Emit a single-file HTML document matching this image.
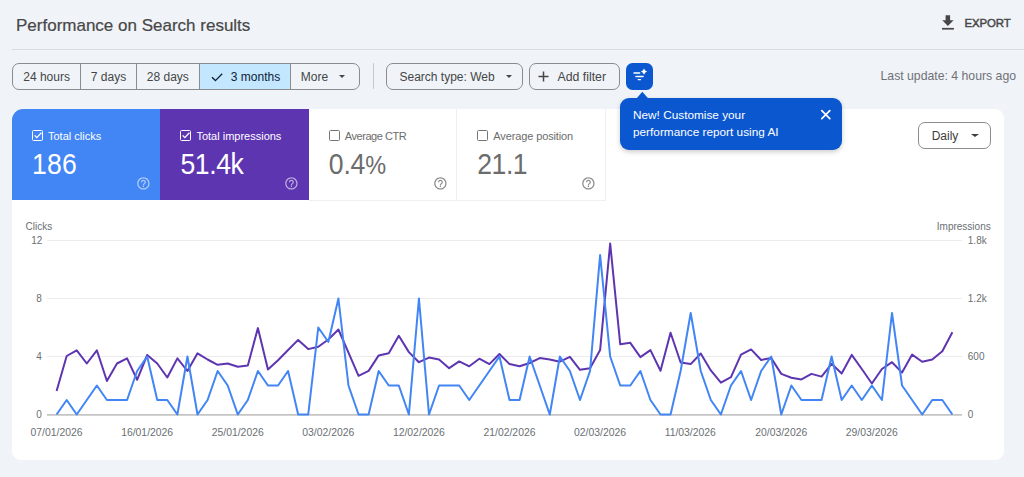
<!DOCTYPE html>
<html><head><meta charset="utf-8">
<style>
*{box-sizing:border-box;margin:0;padding:0}
html,body{width:1024px;height:477px;overflow:hidden;background:#f0f3f8;font-family:"Liberation Sans",sans-serif;position:relative}
.a{position:absolute;white-space:nowrap}
.title{left:16px;top:14.8px;font-size:17px;color:#474747;line-height:22px;-webkit-text-stroke:0.2px #474747}
.hr{left:12px;top:49px;width:1012px;height:1px;background:#d9dce1}
.export{left:964.5px;top:16.6px;font-size:11.4px;font-weight:400;color:#474747;letter-spacing:-0.1px;line-height:13px;-webkit-text-stroke:0.45px #474747}
.seg{left:12px;top:63px;width:348px;height:27px;border:1px solid #8a8c8e;border-radius:7px;overflow:hidden;display:flex}
.seg div{height:100%;border-right:1px solid #8a8c8e;font-size:12px;color:#444746;line-height:26px;position:relative}
.btn{border:1px solid #8a8c8e;border-radius:7px;height:27px;font-size:12px;color:#444746;line-height:26px}
.tri{position:absolute;width:0;height:0;border-left:3.3px solid transparent;border-right:3.3px solid transparent;border-top:3.5px solid #444746}
.card{left:12px;top:109px;width:992px;height:351px;background:#fff;border-radius:9px}
.m{top:109px;height:91px;width:148.4px}
.m .lab{position:absolute;left:36px;top:19.7px;font-size:11px;line-height:14px}
.m .val{position:absolute;left:20px;top:41.2px;font-size:26.6px;line-height:31px;letter-spacing:0.2px;transform:scaleY(1.08);transform-origin:0 24.3px}
.m .cb{position:absolute;left:20px;top:20.8px;width:11px;height:11px;border:1.3px solid;border-radius:1.5px}
.m .help{position:absolute;left:123.8px;top:67px}
.ax{font-size:10px;color:#6b6f73;line-height:12px;margin-top:0.5px}
.dl{font-size:10.4px;color:#6b6f73;line-height:12px;margin-top:0.5px}
</style></head><body>
<div class="a title">Performance on Search results</div>
<svg class="a" style="left:936px;top:10px" width="24" height="24" viewBox="0 0 24 24"><path d="M9.6 5.3h4.5v5h3.5L11.85 16 6.3 10.3h3.3z" fill="#474747"/><rect x="6" y="17.9" width="11.9" height="1.7" fill="#474747"/></svg>
<div class="a export">EXPORT</div>
<div class="a hr"></div>

<div class="a seg">
  <div style="width:68.5px;text-align:center">24 hours</div>
  <div style="width:56px;text-align:center">7 days</div>
  <div style="width:63.3px;text-align:center">28 days</div>
  <div style="width:91.5px;background:#c2e7ff;color:#0e2238"><svg style="position:absolute;left:11px;top:7.6px" width="12" height="10" viewBox="0 0 12 10"><path d="M1 5.2l3.4 3.4L11.2 1.7" fill="none" stroke="#0e2238" stroke-width="1.35"/></svg><span style="position:absolute;left:31px">3 months</span></div>
  <div style="width:68.5px;border-right:none"><span style="position:absolute;left:10px">More</span><span class="tri" style="left:48.5px;top:11px"></span></div>
</div>
<div class="a" style="left:373px;top:63px;width:1px;height:26px;background:#c7c9cc"></div>
<div class="a btn" style="left:386px;top:63px;width:136.5px"><span style="position:absolute;left:12.5px">Search type: Web</span><span class="tri" style="left:118.8px;top:11px"></span></div>
<div class="a btn" style="left:529px;top:63px;width:90.6px"><svg style="position:absolute;left:7.5px;top:6.8px" width="11" height="11" viewBox="0 0 11 11"><path d="M5.5 0.5v10M0.5 5.5h10" stroke="#444746" stroke-width="1.5"/></svg><span style="position:absolute;left:27.5px;font-size:12.3px">Add filter</span></div>
<div class="a" style="left:626px;top:63px;width:26.8px;height:26.5px;background:#0b57d0;border-radius:6.5px"></div>
<svg class="a" style="left:626px;top:63px" width="27" height="27" viewBox="0 0 27 27">
<path d="M8 10h5.7M9.9 13.5h7.2M12.2 16.6h2.3" stroke="#fff" stroke-width="1.4" stroke-linecap="round"/>
<path d="M18 5.5 Q18.8 7.8 21.1 8.6 Q18.8 9.4 18 11.7 Q17.2 9.4 14.9 8.6 Q17.2 7.8 18 5.5z" fill="#fff"/>
</svg>
<div class="a" style="left:880.5px;top:69px;font-size:12.25px;color:#6f7275;line-height:14px">Last update: 4 hours ago</div>

<div class="a card"></div>
<!-- metrics -->
<div class="a m" style="left:12px;background:#4285f4;color:#fff;border-top-left-radius:11px">
 <div class="cb" style="border-color:#fff"><svg style="position:absolute;left:0.8px;top:1.2px" width="8" height="7" viewBox="0 0 8 7"><path d="M0.6 3.4l2.2 2.2L7.4 0.8" fill="none" stroke="#fff" stroke-width="1.3"/></svg></div>
 <div class="lab">Total clicks</div><div class="val">186</div>
 <svg class="help" width="14.8" height="14.8" viewBox="0 0 24 24"><path fill="rgba(255,255,255,.6)" d="M11 18h2v-2h-2v2zm1-16C6.48 2 2 6.48 2 12s4.48 10 10 10 10-4.48 10-10S17.52 2 12 2zm0 18c-4.41 0-8-3.59-8-8s3.59-8 8-8 8 3.59 8 8-3.59 8-8 8zm0-14c-2.21 0-4 1.79-4 4h2c0-1.1.9-2 2-2s2 .9 2 2c0 2-3 1.75-3 5h2c0-2.25 3-2.5 3-5 0-2.21-1.79-4-4-4z"/></svg>
</div>
<div class="a m" style="left:160.4px;background:#5e35b1;color:#fff">
 <div class="cb" style="border-color:#fff"><svg style="position:absolute;left:0.8px;top:1.2px" width="8" height="7" viewBox="0 0 8 7"><path d="M0.6 3.4l2.2 2.2L7.4 0.8" fill="none" stroke="#fff" stroke-width="1.3"/></svg></div>
 <div class="lab">Total impressions</div><div class="val" style="letter-spacing:-0.4px">51.4k</div>
 <svg class="help" width="14.8" height="14.8" viewBox="0 0 24 24"><path fill="rgba(255,255,255,.6)" d="M11 18h2v-2h-2v2zm1-16C6.48 2 2 6.48 2 12s4.48 10 10 10 10-4.48 10-10S17.52 2 12 2zm0 18c-4.41 0-8-3.59-8-8s3.59-8 8-8 8 3.59 8 8-3.59 8-8 8zm0-14c-2.21 0-4 1.79-4 4h2c0-1.1.9-2 2-2s2 .9 2 2c0 2-3 1.75-3 5h2c0-2.25 3-2.5 3-5 0-2.21-1.79-4-4-4z"/></svg>
</div>
<div class="a m" style="left:308.8px;background:#fff;color:#6c6c6c">
 <div class="cb" style="border-color:#757575"></div>
 <div class="lab" style="letter-spacing:-0.45px">Average CTR</div><div class="val" style="letter-spacing:-0.2px">0.4<span style="font-size:23.5px">%</span></div>
 <svg class="help" width="14.8" height="14.8" viewBox="0 0 24 24"><path fill="#8a8a8a" d="M11 18h2v-2h-2v2zm1-16C6.48 2 2 6.48 2 12s4.48 10 10 10 10-4.48 10-10S17.52 2 12 2zm0 18c-4.41 0-8-3.59-8-8s3.59-8 8-8 8 3.59 8 8-3.59 8-8 8zm0-14c-2.21 0-4 1.79-4 4h2c0-1.1.9-2 2-2s2 .9 2 2c0 2-3 1.75-3 5h2c0-2.25 3-2.5 3-5 0-2.21-1.79-4-4-4z"/></svg>
</div>
<div class="a" style="left:456.3px;top:109px;width:1px;height:91px;background:#efefef"></div>
<div class="a" style="left:308.8px;top:199.5px;width:297px;height:1px;background:#efefef"></div>
<div class="a" style="left:604.8px;top:109px;width:1px;height:91px;background:#efefef"></div>
<div class="a m" style="left:457.3px;width:147.5px;background:#fff;color:#6c6c6c">
 <div class="cb" style="border-color:#757575"></div>
 <div class="lab" style="letter-spacing:-0.12px">Average position</div><div class="val" style="letter-spacing:-0.5px">21.1</div>
 <svg class="help" width="14.8" height="14.8" viewBox="0 0 24 24"><path fill="#8a8a8a" d="M11 18h2v-2h-2v2zm1-16C6.48 2 2 6.48 2 12s4.48 10 10 10 10-4.48 10-10S17.52 2 12 2zm0 18c-4.41 0-8-3.59-8-8s3.59-8 8-8 8 3.59 8 8-3.59 8-8 8zm0-14c-2.21 0-4 1.79-4 4h2c0-1.1.9-2 2-2s2 .9 2 2c0 2-3 1.75-3 5h2c0-2.25 3-2.5 3-5 0-2.21-1.79-4-4-4z"/></svg>
</div>

<!-- tooltip -->
<div class="a" style="left:619.8px;top:97.8px;width:222px;height:52px;background:#0b57d0;border-radius:9px;box-shadow:0 2px 5px rgba(0,0,0,.2)"></div>
<svg class="a" style="left:636px;top:91px" width="13" height="8" viewBox="0 0 13 8"><path d="M0.5 7.5 L6.3 0.8 L12.3 7.5z" fill="#0b57d0"/></svg>
<div class="a" style="left:633px;top:107.2px;font-size:11.8px;line-height:16.9px;color:#fff">New! Customise your<br>performance report using AI</div>
<svg class="a" style="left:820px;top:108.5px" width="11" height="11" viewBox="0 0 11 11"><path d="M1.8 1.7l8 8M9.8 1.7l-8 8" stroke="#fff" stroke-width="1.7" stroke-linecap="round"/></svg>

<!-- daily -->
<div class="a btn" style="left:918px;top:122px;width:73px;height:26.5px;border-color:#8a8c8e"><span style="position:absolute;left:12.7px;top:0;color:#3c3c3c">Daily</span><span class="tri" style="left:52px;top:11px;border-left-width:4px;border-right-width:4px;border-top-color:#3c3c3c"></span></div>

<!-- chart -->
<div class="a ax" style="left:25.5px;top:220px">Clicks</div>
<div class="a ax" style="left:936.8px;top:220px">Impressions</div>
<svg class="a" style="left:0;top:0" width="1024" height="477">
 <g stroke="#ececec" stroke-width="1">
  <line x1="47" y1="240.5" x2="962" y2="240.5"/>
  <line x1="47" y1="298.5" x2="962" y2="298.5"/>
  <line x1="47" y1="356.5" x2="962" y2="356.5"/>
 </g>
 <line x1="47" y1="414.8" x2="962" y2="414.8" stroke="#c4c4c4" stroke-width="1.8"/>
 <polyline fill="none" stroke="#5e35b1" stroke-width="2" stroke-linejoin="round" points="56.60,391.00 66.67,356.00 76.73,350.30 86.80,363.50 96.86,350.30 106.92,381.00 116.99,363.50 127.06,358.40 137.12,379.80 147.19,355.00 157.25,363.50 167.31,377.50 177.38,358.40 187.44,371.00 197.51,353.30 207.57,359.50 217.64,364.80 227.70,363.50 237.77,366.70 247.83,365.50 257.90,328.10 267.96,369.60 278.03,360.30 288.09,350.00 298.16,339.90 308.23,349.10 318.29,346.70 328.36,339.50 338.42,329.50 348.49,352.70 358.55,375.80 368.62,370.90 378.68,355.40 388.75,353.20 398.81,335.80 408.88,352.10 418.94,362.20 429.00,357.60 439.07,359.50 449.13,368.20 459.20,361.40 469.26,366.30 479.33,358.70 489.39,364.10 499.46,354.00 509.52,364.10 519.59,366.30 529.65,363.00 539.72,358.10 549.78,359.50 559.85,361.70 569.91,356.80 579.98,369.80 590.04,368.20 600.11,350.10 610.17,243.50 620.24,344.30 630.30,342.80 640.37,357.10 650.43,350.10 660.50,370.80 670.56,332.70 680.63,362.50 690.69,364.10 700.76,353.50 710.83,370.40 720.89,382.60 730.96,377.20 741.02,354.60 751.09,349.40 761.15,360.00 771.22,358.10 781.28,373.90 791.35,377.70 801.41,379.40 811.48,373.90 821.54,376.60 831.61,363.80 841.67,373.50 851.74,354.90 861.80,369.00 871.87,383.50 881.93,369.00 892.00,362.20 902.06,372.60 912.12,354.60 922.19,361.70 932.25,359.50 942.32,351.30 952.38,332.20"/>
 <polyline fill="none" stroke="#4285f4" stroke-width="2" stroke-linejoin="round" points="56.60,414.50 66.67,400.00 76.73,414.50 86.80,400.00 96.86,385.50 106.92,400.00 116.99,400.00 127.06,400.00 137.12,371.00 147.19,356.50 157.25,400.00 167.31,400.00 177.38,414.50 187.44,356.50 197.51,414.50 207.57,400.00 217.64,371.00 227.70,385.50 237.77,414.50 247.83,400.00 257.90,371.00 267.96,385.50 278.03,385.50 288.09,371.00 298.16,414.50 308.23,414.50 318.29,327.50 328.36,342.00 338.42,298.50 348.49,385.50 358.55,414.50 368.62,414.50 378.68,371.00 388.75,385.50 398.81,385.50 408.88,414.50 418.94,298.50 429.00,414.50 439.07,385.50 449.13,385.50 459.20,385.50 469.26,400.00 479.33,385.50 489.39,371.00 499.46,356.50 509.52,400.00 519.59,400.00 529.65,356.50 539.72,385.50 549.78,414.50 559.85,356.50 569.91,371.00 579.98,400.00 590.04,371.00 600.11,255.00 610.17,356.50 620.24,385.50 630.30,385.50 640.37,371.00 650.43,400.00 660.50,414.50 670.56,414.50 680.63,371.00 690.69,313.00 700.76,371.00 710.83,400.00 720.89,414.50 730.96,385.50 741.02,371.00 751.09,400.00 761.15,371.00 771.22,356.50 781.28,414.50 791.35,385.50 801.41,400.00 811.48,400.00 821.54,400.00 831.61,356.50 841.67,400.00 851.74,385.50 861.80,400.00 871.87,385.50 881.93,400.00 892.00,313.00 902.06,385.50 912.12,400.00 922.19,414.50 932.25,400.00 942.32,400.00 952.38,414.50"/>
</svg>
<div class="a ax" style="left:31.3px;top:234.5px">12</div>
<div class="a ax" style="left:36.2px;top:292.5px">8</div>
<div class="a ax" style="left:36.2px;top:350.5px">4</div>
<div class="a ax" style="left:36.2px;top:408.5px">0</div>
<div class="a ax" style="left:967.8px;top:234.5px">1.8k</div>
<div class="a ax" style="left:967.8px;top:292.5px">1.2k</div>
<div class="a ax" style="left:967.8px;top:350.5px">600</div>
<div class="a ax" style="left:967.8px;top:408.5px">0</div>
<div class="a dl" style="left:30.55px;top:426px">07/01/2026</div>
<div class="a dl" style="left:121.14px;top:426px">16/01/2026</div>
<div class="a dl" style="left:211.72px;top:426px">25/01/2026</div>
<div class="a dl" style="left:302.31px;top:426px">03/02/2026</div>
<div class="a dl" style="left:392.89px;top:426px">12/02/2026</div>
<div class="a dl" style="left:483.47px;top:426px">21/02/2026</div>
<div class="a dl" style="left:574.06px;top:426px">02/03/2026</div>
<div class="a dl" style="left:664.64px;top:426px">11/03/2026</div>
<div class="a dl" style="left:755.23px;top:426px">20/03/2026</div>
<div class="a dl" style="left:845.82px;top:426px">29/03/2026</div>
</body></html>
